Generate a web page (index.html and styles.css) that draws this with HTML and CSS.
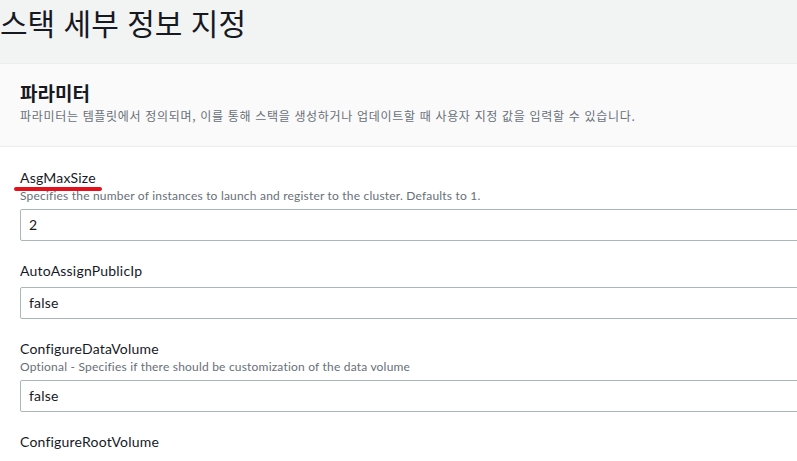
FILE: index.html
```html
<!DOCTYPE html>
<html lang="ko">
<head>
<meta charset="utf-8">
<title>스택 세부 정보 지정</title>
<link rel="stylesheet" href="styles.css">
</head>
<body>
<header class="page-head">
  <h1 class="page-title">스택 세부 정보 지정</h1>
</header>
<section class="panel">
  <h2 class="panel-title">파라미터</h2>
  <p class="panel-desc">파라미터는 템플릿에서 정의되며, 이를 통해 스택을 생성하거나 업데이트할 때 사용자 지정 값을 입력할 수 있습니다.</p>
</section>
<main class="form">
  <div class="field">
    <div class="label-block">
      <div class="label"><span class="marked">AsgMaxSize</span></div>
      <div class="desc">Specifies the number of instances to launch and register to the cluster. Defaults to 1.</div>
    </div>
    <div class="input">2</div>
  </div>
  <div class="field">
    <div class="label-block">
      <div class="label">AutoAssignPublicIp</div>
    </div>
    <div class="input">false</div>
  </div>
  <div class="field">
    <div class="label-block">
      <div class="label">ConfigureDataVolume</div>
      <div class="desc">Optional - Specifies if there should be customization of the data volume</div>
    </div>
    <div class="input">false</div>
  </div>
  <div class="field">
    <div class="label-block">
      <div class="label">ConfigureRootVolume</div>
    </div>
  </div>
</main>
</body>
</html>
```

FILE: styles.css
```css
html, body {
  margin: 0;
  padding: 0;
  background: #ffffff;
  overflow: hidden;
}
body {
  font-family: "Lato", "Noto Sans CJK KR", sans-serif;
  color: #16191f;
  width: 797px;
  height: 461px;
}
.page-head {
  background: #f2f3f3;
  height: 63px;
  box-sizing: border-box;
  padding-top: 1px;
}
.page-title {
  margin: 0;
  font-family: "Noto Sans CJK KR", sans-serif;
  font-weight: 400;
  font-size: 30px;
  line-height: 42px;
  color: #16191f;
}
.panel {
  background: #fafafa;
  border-top: 1px solid #eaeded;
  border-bottom: 1px solid #eaeded;
  box-sizing: border-box;
  height: 84px;
  padding: 16px 20px 0;
}
.panel-title {
  margin: 0;
  font-family: "Noto Sans CJK KR", sans-serif;
  font-weight: 700;
  font-size: 19px;
  line-height: 25px;
}
.panel-desc {
  margin: 3px 0 0;
  font-family: "Noto Sans CJK KR", sans-serif;
  font-size: 12px;
  line-height: 16px;
  letter-spacing: 0.68px;
  color: #687078;
}
.form {
  padding: 21px 0 0 20px;
  margin-right: -40px;
  display: flex;
  flex-direction: column;
  gap: 20px;
}
.field {
  display: flex;
  flex-direction: column;
  gap: 6px;
}
.label {
  font-size: 14px;
  line-height: 20px;
  letter-spacing: 0.2px;
  color: #16191f;
}
.marked {
  position: relative;
}
.marked::after {
  content: "";
  position: absolute;
  left: -6px;
  right: -6px;
  top: 18px;
  height: 3.5px;
  border-radius: 2px;
  background: #e4101c;
}
.desc {
  font-size: 12px;
  line-height: 15px;
  letter-spacing: 0.2px;
  color: #687078;
}
.input {
  height: 32px;
  box-sizing: border-box;
  border: 1px solid #aab7b8;
  border-radius: 2px;
  background: #ffffff;
  padding: 0 8px;
  font-size: 14px;
  line-height: 30px;
  letter-spacing: 0.2px;
  color: #16191f;
}
```
